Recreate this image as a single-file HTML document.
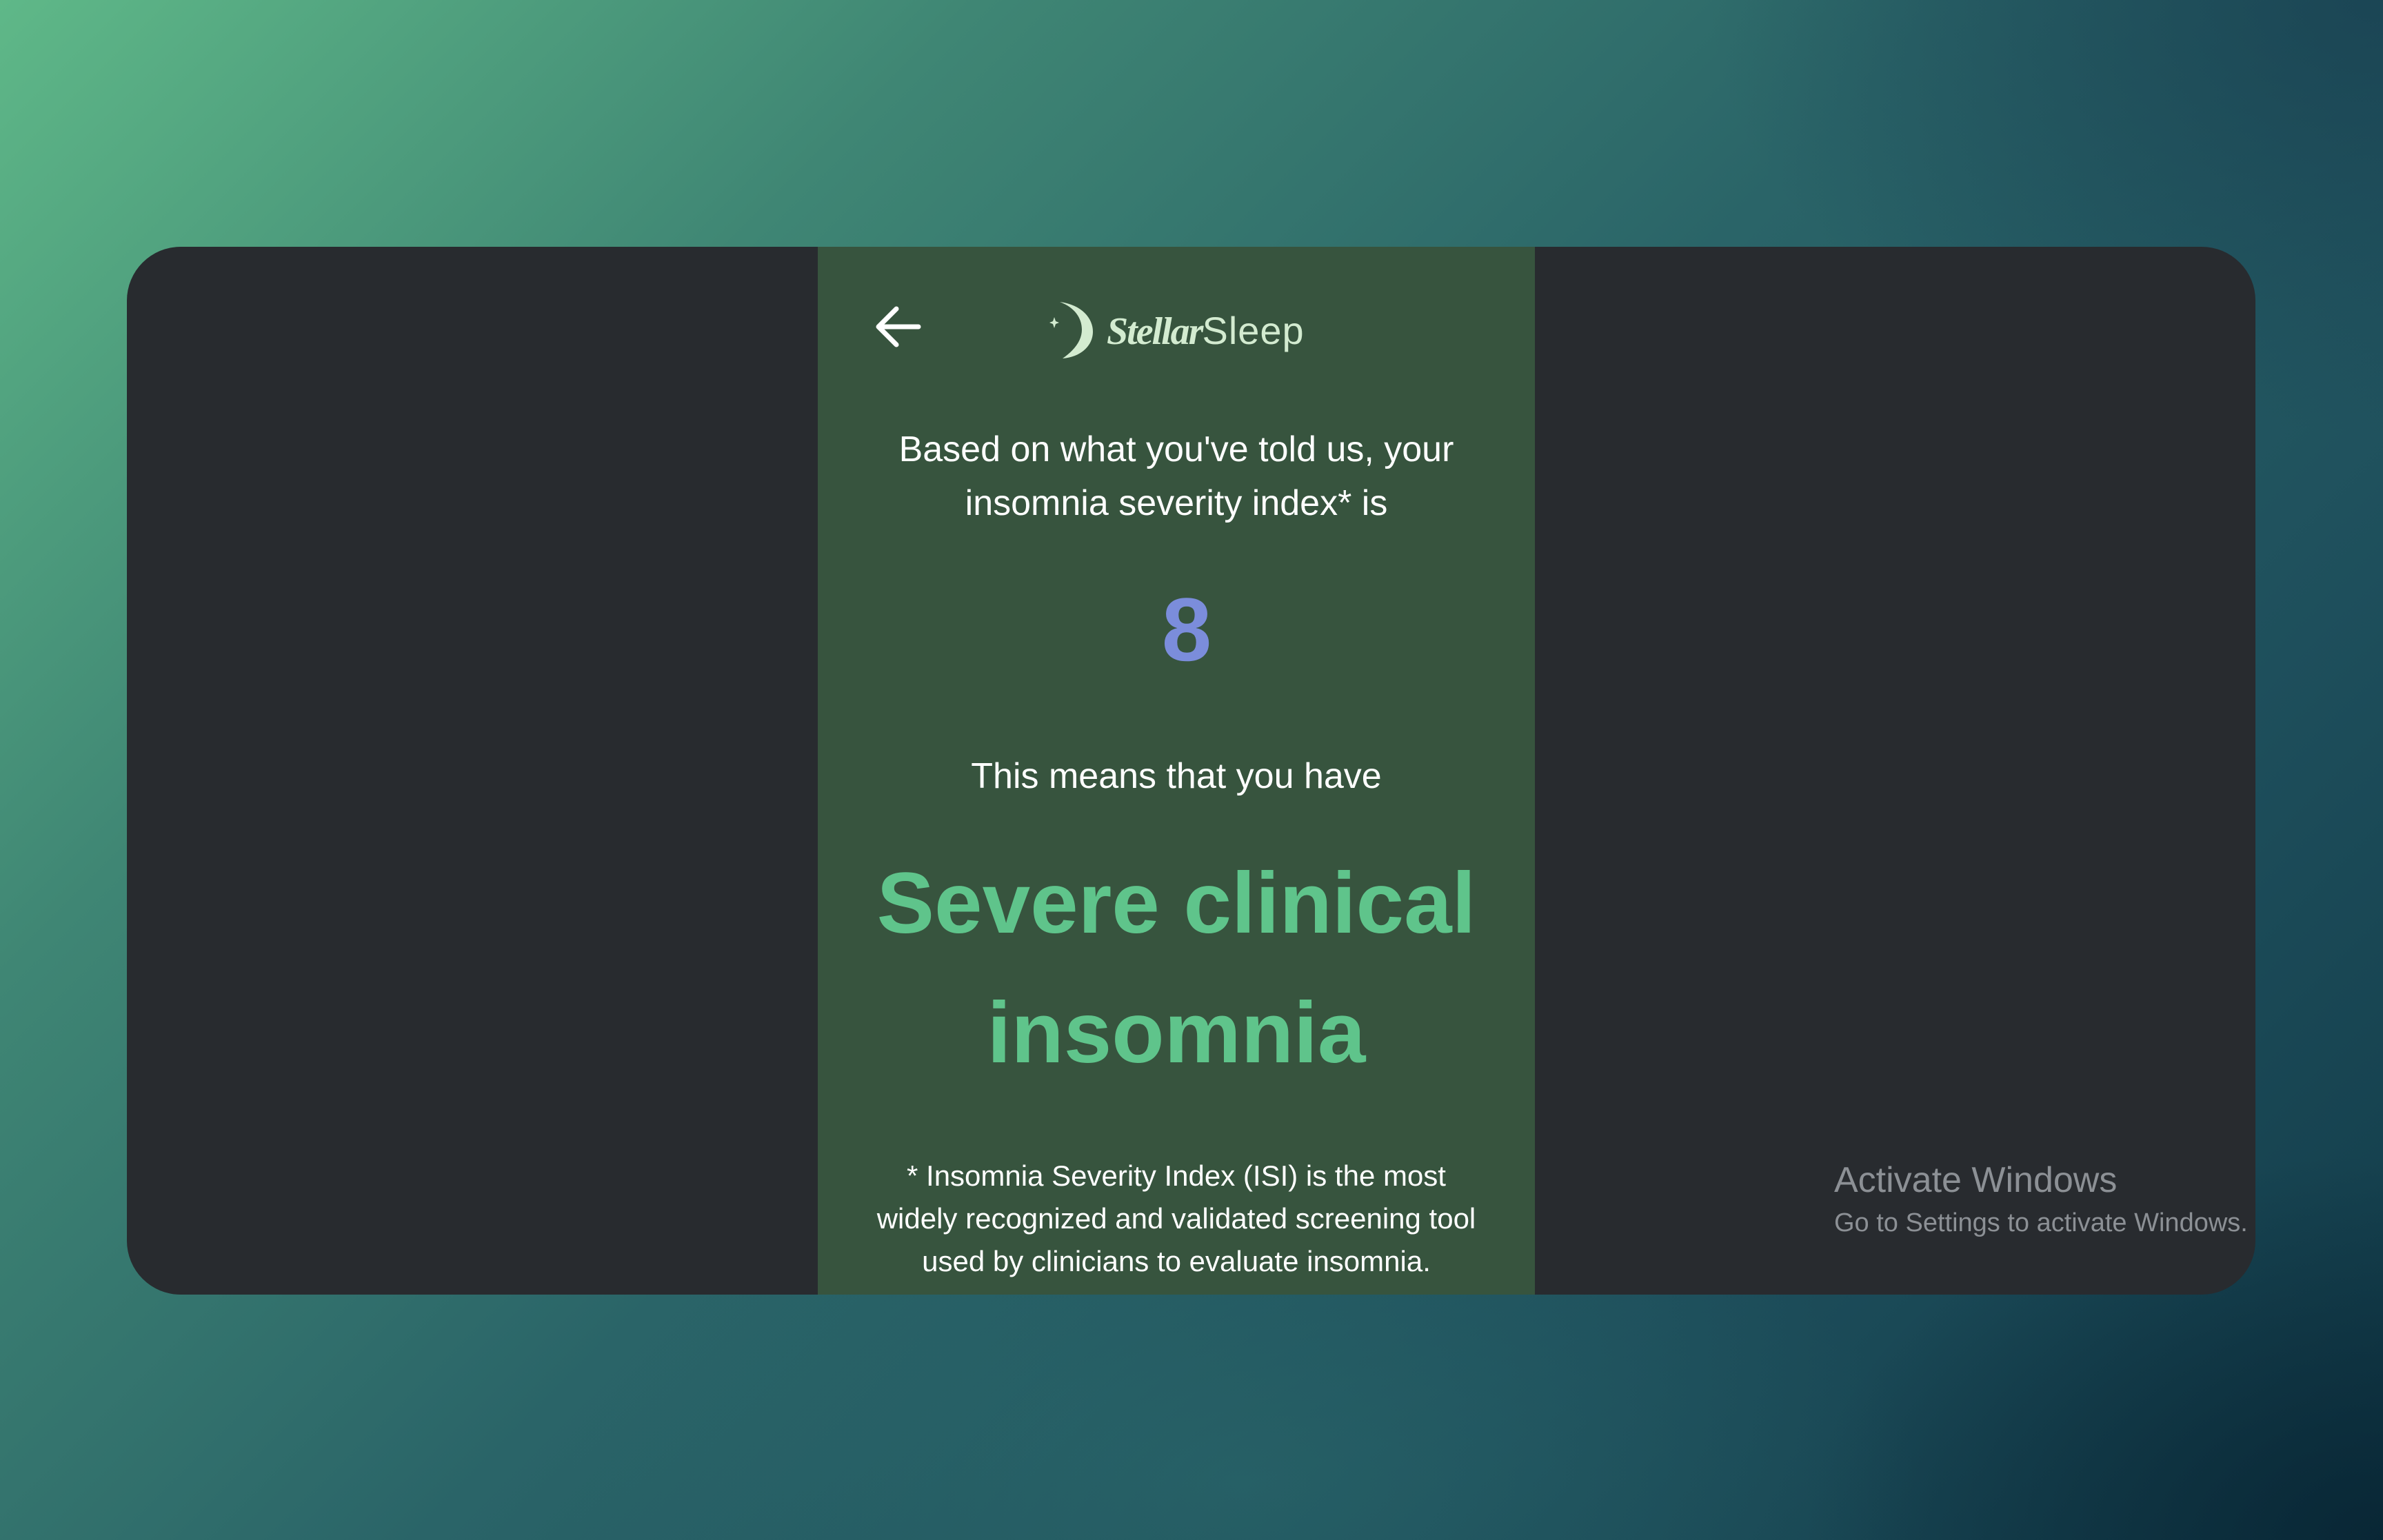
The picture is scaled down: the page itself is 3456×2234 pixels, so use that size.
<!DOCTYPE html>
<html><head><meta charset="utf-8"><style>
html,body{margin:0;padding:0}
body{width:3456px;height:2234px;overflow:hidden;position:relative;font-family:"Liberation Sans",Arial,sans-serif;
background:
radial-gradient(ellipse 1400px 700px at 1800px 2150px, rgba(45,110,110,0.45), rgba(45,110,110,0) 70%),
radial-gradient(ellipse 1200px 800px at 3456px 2234px, rgba(5,30,45,0.7), rgba(5,30,45,0) 70%),
radial-gradient(ellipse 1400px 900px at 3456px 0px, rgba(20,55,75,0.6), rgba(20,55,75,0) 70%),
linear-gradient(135deg,#5fb888 0%,#3f8674 25%,#2a6468 50%,#1e4f5c 75%,#113a48 100%);}
.card{position:absolute;left:184px;top:358px;width:3087px;height:1520px;background:#282b2f;border-radius:78px;overflow:hidden}
.panel{position:absolute;left:1186px;top:358px;width:1040px;height:1520px;background:#37543e}
.t{position:absolute;left:1186px;width:1040px;text-align:center;color:#fff}
.aw{position:absolute;left:2660px;color:#8c9095;white-space:nowrap}
</style></head><body>
<div class="card"></div>
<div class="panel"></div>
<svg style="position:absolute;left:1266px;top:440px" width="72" height="68" viewBox="0 0 72 68">
<path d="M66 34 H10 M34 8 L8 34 L34 60" fill="none" stroke="#fff" stroke-width="7" stroke-linecap="round" stroke-linejoin="round"/></svg>
<svg style="position:absolute;left:1515px;top:434px" width="80" height="90" viewBox="0 0 80 90">
<path d="M22 4 C54 8 70 28 70 47 C70 68 52 84 26 86 C46 72 54 58 54 44 C54 28 44 12 22 4 Z" fill="#d3ebd0"/>
<path d="M14 26 L16 32 L21 34 L16 36 L14 42 L12 36 L7 34 L12 32 Z" fill="#d3ebd0"/></svg>
<div style="position:absolute;left:1605px;top:448px;font-size:56px;color:#d3ebd0;white-space:nowrap;line-height:64px"><span style="font-family:'Liberation Serif',serif;font-style:italic;font-weight:bold;letter-spacing:-2px">Stellar</span><span style="letter-spacing:1px">Sleep</span></div>
<div class="t" style="top:613px;font-size:52px;line-height:78px">Based on what you've told us, your<br>insomnia severity index* is</div>
<div class="t" style="top:848px;font-size:130px;line-height:130px;font-weight:bold;color:#7b8ddb;padding-left:30px;box-sizing:border-box">8</div>
<div class="t" style="top:1087px;font-size:52px;line-height:78px">This means that you have</div>
<div class="t" style="top:1217px;font-size:125px;line-height:188px;font-weight:bold;color:#5fc48b">Severe clinical<br>insomnia</div>
<div class="t" style="top:1675px;font-size:42px;line-height:62px">* Insomnia Severity Index (ISI) is the most<br>widely recognized and validated screening tool<br>used by clinicians to evaluate insomnia.</div>
<div class="aw" style="top:1682px;font-size:52px;line-height:60px">Activate Windows</div>
<div class="aw" style="top:1751px;font-size:38px;line-height:46px">Go to Settings to activate Windows.</div>
</body></html>
